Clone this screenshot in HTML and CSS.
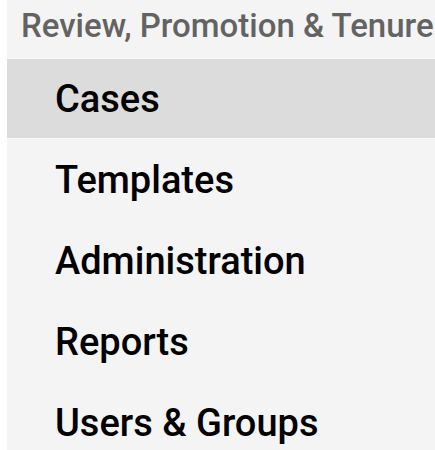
FILE: index.html
```html
<!DOCTYPE html>
<html lang="en">
<head>
<meta charset="utf-8">
<title>Review, Promotion &amp; Tenure</title>
<link rel="stylesheet" href="styles.css">
</head>
<body>
<nav class="sidebar">
  <div class="sidebar-title">Review, Promotion &amp; Tenure</div>
  <ul class="nav-list">
    <li class="nav-item is-active"><a href="#">Cases</a></li>
    <li class="nav-item"><a href="#">Templates</a></li>
    <li class="nav-item"><a href="#">Administration</a></li>
    <li class="nav-item"><a href="#">Reports</a></li>
    <li class="nav-item"><a href="#">Users &amp; Groups</a></li>
  </ul>
</nav>
</body>
</html>
```

FILE: styles.css
```css
html, body {
  margin: 0;
  padding: 0;
  background: #ffffff;
  height: 100%;
  overflow: hidden;
}

.sidebar {
  margin-left: 7px;
  min-height: 100%;
  background: #f4f4f4;
  font-family: Roboto, "Noto Sans", "Liberation Sans", sans-serif;
}

.sidebar-title {
  height: 58px;
  box-sizing: border-box;
  padding-left: 14px;
  font-size: 33px;
  line-height: 51px;
  font-weight: 500;
  color: #636363;
  white-space: nowrap;
}

.nav-list {
  list-style: none;
  margin: 0;
  padding: 0;
}

.nav-item {
  height: 81px;
  box-sizing: border-box;
  padding-top: 3px;
  border-top: 1px solid transparent;
  border-bottom: 1px solid transparent;
}

.nav-item a {
  display: block;
  padding-left: 48px;
  font-size: 38px;
  line-height: 75px;
  font-weight: 500;
  color: #000000;
  text-decoration: none;
  white-space: nowrap;
}

.nav-item.is-active {
  background: #dcdcdc;
  border-top-color: #f9f9f9;
  border-bottom-color: #f9f9f9;
}
```
